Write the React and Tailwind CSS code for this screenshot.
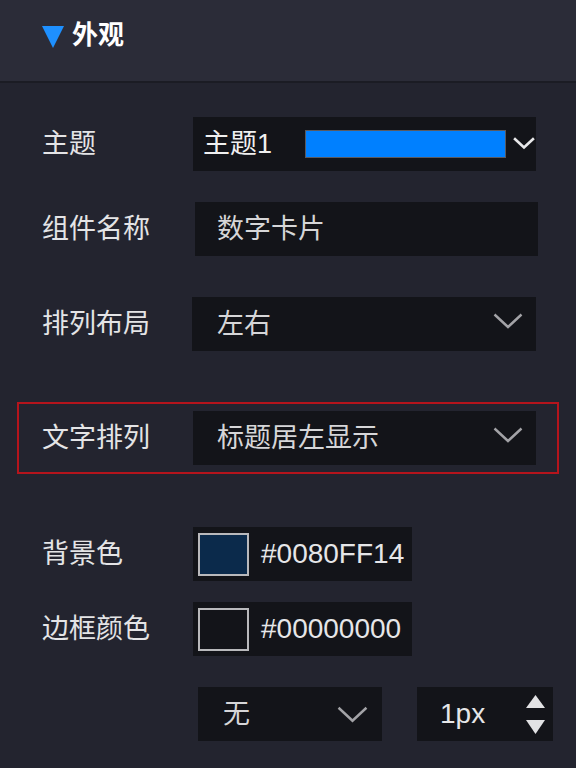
import React, { useState } from 'react';

const font = { fontFamily: '"Liberation Sans", "Noto Sans CJK SC", sans-serif' };

function Chevron({ className, width = 2.4 }) {
  return (
    <svg viewBox="0 0 30 16" className={className} fill="none">
      <path d="M1.5 1.5 L15 14 L28.5 1.5" stroke="currentColor" strokeWidth={width} />
    </svg>
  );
}

function Row({ label, children, className = '' }) {
  return (
    <div className={`flex items-center h-[54px] ${className}`}>
      <div className="w-[151px] shrink-0 text-[27px] text-[#e4e4e6] leading-none">{label}</div>
      {children}
    </div>
  );
}

function Select({ value, className = '' }) {
  return (
    <div className={`flex items-center justify-between h-[54px] bg-[#131419] pl-[24px] pr-[13px] ${className}`}>
      <span className="text-[27px] text-[#d6d6d8] leading-none">{value}</span>
      <Chevron className="w-[30px] h-[16px] text-[#a3a3a7] -mt-[6px]" />
    </div>
  );
}

function ColorField({ swatch, hex }) {
  return (
    <div className="flex items-center h-[54px] w-[219px] bg-[#131419] pl-[5px]">
      <div className={`w-[51px] h-[43px] border-2 border-[#b9b9bc] ${swatch}`} />
      <span className="ml-[12px] text-[28px] text-[#e6e6e8] leading-none">{hex}</span>
    </div>
  );
}

export default function App() {
  const [open] = useState(true);

  return (
    <div className="w-[576px] h-[768px] bg-[#23242f] overflow-hidden" style={font}>
      <header className="h-[83px] bg-[#2b2c38] border-b-2 border-[#1b1c24] flex items-center pl-[42px] pb-[12px]">
        <svg viewBox="0 0 22 22" className="w-[22px] h-[22px] mt-[4px]">
          <polygon points="0,0 22,0 11,22" fill="#1e90ff" />
        </svg>
        <span className="ml-[8px] text-[26px] font-bold text-white leading-none">外观</span>
      </header>

      {open && (
        <div className="pt-[34px]">
          <div className="pl-[42px]">
            <Row label="主题">
              <div className="flex items-center h-[54px] w-[343px] bg-[#131419] pl-[10px] pr-[1px]">
                <span className="text-[27px] text-[#f0f0f0] leading-none">主题1</span>
                <div className="ml-[33px] w-[201px] h-[28px] bg-[#0080ff] border border-[#5a5a60]" />
                <Chevron width={3.6} className="ml-auto w-[22px] h-[14px] text-[#e8e8ea] -mt-[2px]" />
              </div>
            </Row>

            <Row label="组件名称" className="mt-[31px]">
              <div className="flex items-center h-[54px] w-[343px] ml-[2px] bg-[#131419] pl-[22px]">
                <span className="text-[27px] text-[#d6d6d8] leading-none">数字卡片</span>
              </div>
            </Row>

            <Row label="排列布局" className="mt-[41px]">
              <Select value="左右" className="w-[344px] -ml-[1px] pl-[25px]" />
            </Row>
          </div>

          <div className="mt-[51px] ml-[17px] w-[542px] border-2 border-[#b5141c] pl-[23px] py-[7px]">
            <Row label="文字排列">
              <Select value="标题居左显示" className="w-[343px]" />
            </Row>
          </div>

          <div className="pl-[42px]">
            <Row label="背景色" className="mt-[53px]">
              <ColorField swatch="bg-[#0b2a4b]" hex="#0080FF14" />
            </Row>
            <Row label="边框颜色" className="mt-[21px]">
              <ColorField swatch="bg-[#131419]" hex="#00000000" />
            </Row>
          </div>

          <div className="flex mt-[31px] ml-[198px]">
            <div className="flex items-center justify-between h-[54px] w-[184px] bg-[#131419] pl-[25px] pr-[14px]">
              <span className="text-[27px] text-[#d6d6d8] leading-none">无</span>
              <Chevron className="w-[31px] h-[17px] text-[#a3a3a7]" />
            </div>
            <div className="flex items-center justify-between h-[54px] w-[136px] ml-[35px] bg-[#131419] pl-[23px] pr-[8px]">
              <span className="text-[28px] text-[#e6e6e8] leading-none">1px</span>
              <div className="flex flex-col gap-[12px]">
                <svg viewBox="0 0 19 13" className="w-[19px] h-[13px]">
                  <polygon points="0,13 19,13 9.5,0" fill="#e2e2e4" />
                </svg>
                <svg viewBox="0 0 19 14" className="w-[19px] h-[14px]">
                  <polygon points="0,0 19,0 9.5,14" fill="#e2e2e4" />
                </svg>
              </div>
            </div>
          </div>
        </div>
      )}
    </div>
  );
}
